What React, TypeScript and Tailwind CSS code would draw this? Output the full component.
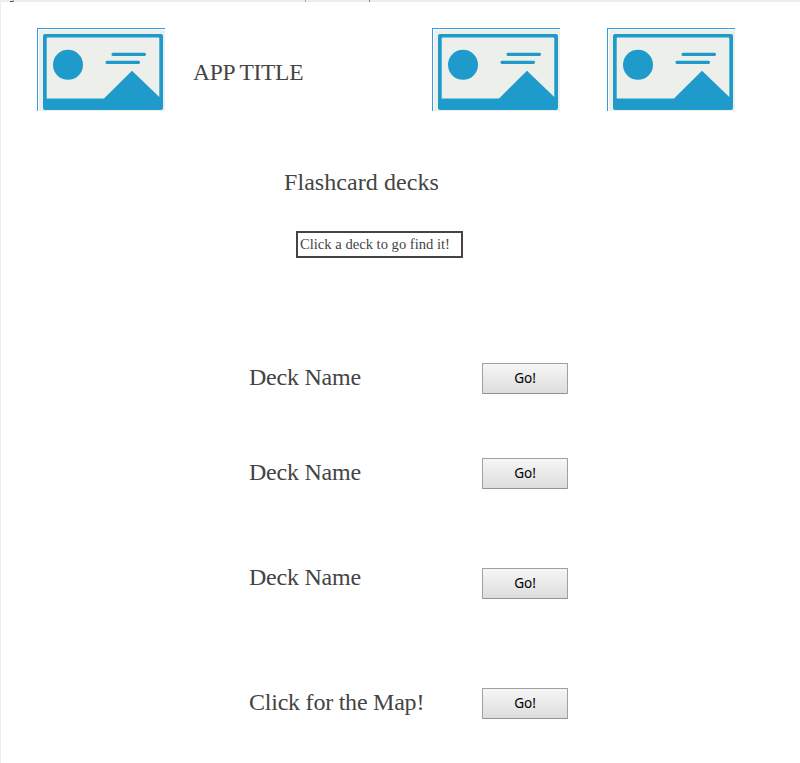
const serif = "font-['Liberation_Serif',serif] text-[#444444] whitespace-nowrap";

function Picture() {
  return (
    <svg className="block h-[83px] w-[128px] shrink-0" viewBox="0 0 128 83">
      <rect width="128" height="83" fill="#3399eb" />
      <rect x="1" y="1" width="127" height="82" fill="#fff" />
      <rect x="2" y="2" width="126" height="81" fill="#edefeb" />
      <g className="blur-[0.4px]">
        <rect x="6" y="6" width="120" height="76" rx="2" fill="#1e9bca" />
        <path d="M10.5 9.5H121.5L122.3 10.3V69L95 42.7L67 70.5H9.7V10.3Z" fill="#edefeb" />
        <circle cx="31" cy="36.8" r="15" fill="#1e9bca" />
        <path d="M76 26.3H107.5M70 34.3H101.5" stroke="#1e9bca" strokeWidth="3.2" strokeLinecap="round" />
      </g>
    </svg>
  );
}

function GoButton() {
  return (
    <button className="flex h-[31px] w-[86px] items-center justify-center rounded-[1px] border border-[#a0a0a0] border-b-[#929292] bg-linear-to-b from-[#f6f6f6] to-[#dddddd] pb-[2px] font-['Noto_Sans',sans-serif] text-[13.6px] leading-4 tracking-[-0.1px] text-black">
      Go!
    </button>
  );
}

const decks = [
  { label: "Deck Name", row: "mt-[105px]", text: "-mt-1" },
  { label: "Deck Name", row: "mt-16", text: "-mt-1" },
  { label: "Deck Name", row: "mt-[79px]", text: "-mt-[14px]" },
  { label: "Click for the Map!", row: "mt-[89px]", text: "-mt-1" },
];

export default function App() {
  return (
    <div className="h-[763px] w-[800px] overflow-hidden border-l border-[#ededed] bg-white">
      <div className="flex h-[2px] items-end bg-[#ededed]">
        <div className="ml-[9px] h-px w-[3px] bg-[#4a4a4a]" />
        <div className="h-[2px] w-px bg-[#7fa8d8]" />
        <div className="ml-[291px] h-[2px] w-px bg-[#c9a079]" />
        <div className="ml-[63px] h-[2px] w-px bg-[#c96a60]" />
      </div>
      <header className="flex pt-[26px] pl-9">
        <Picture />
        <h1 className={`${serif} ml-7 mt-[30px] w-[239px] text-[23.5px] leading-7 tracking-[-0.3px]`}>APP TITLE</h1>
        <Picture />
        <div className="w-[47px]" />
        <Picture />
      </header>
      <main>
        <h2 className={`${serif} mt-[57px] ml-[283px] text-[24px] leading-7 tracking-[0.06px]`}>Flashcard decks</h2>
        <div className={`${serif} mt-[35px] ml-[295px] flex h-[27px] w-[167px] items-center border-2 border-[#444444] pb-[2px] pl-[2px] text-[14.6px] leading-4`}>
          Click a deck to go find it!
        </div>
        {decks.map((deck, i) => (
          <div key={i} className={`${deck.row} ml-[248px] flex h-[31px] w-[319px] items-center justify-between`}>
            <span className={`${serif} ${deck.text} text-[24px] leading-7 tracking-[-0.23px]`}>{deck.label}</span>
            <GoButton />
          </div>
        ))}
      </main>
    </div>
  );
}
